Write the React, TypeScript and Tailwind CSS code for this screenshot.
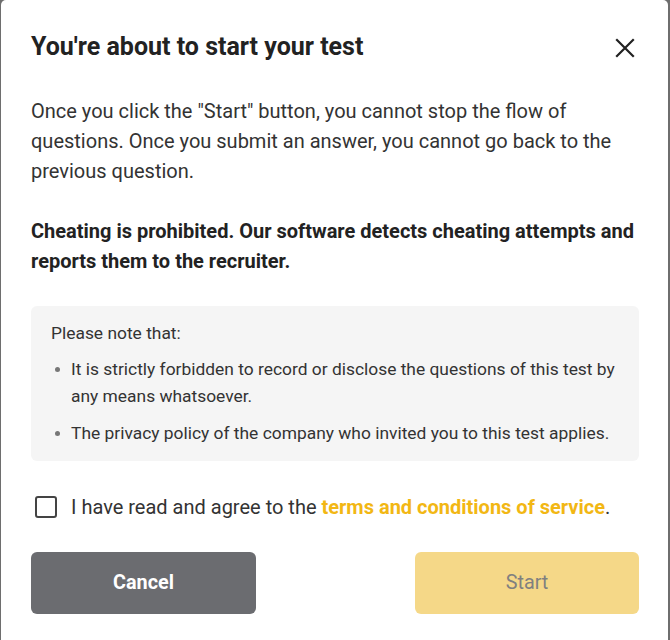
import React from "react";

export default function App() {
  return (
    <div className="w-[670px] h-[640px] bg-[#6e6e6e] overflow-hidden" style={{ fontFamily: "Roboto, 'Open Sans', sans-serif" }}>
      <div className="ml-[1px] w-[667px] h-[640px] bg-white rounded-t-[5px] px-[30px] pt-[31px]">
        <div className="flex items-center justify-between h-[32px]">
          <h1 className="text-[25px] leading-[32px] font-bold text-[#222]">You're about to start your test</h1>
          <svg width="20" height="20" viewBox="0 0 20 20" className="mr-[3px] mt-[1px]">
            <path d="M2 2 L18 18 M18 2 L2 18" stroke="#222" strokeWidth="2.2" strokeLinecap="square" />
          </svg>
        </div>
        <p className="mt-[33px] text-[20px] leading-[30px] text-[#333]">
          Once you click the "Start" button, you cannot stop the flow of questions. Once you submit an answer, you cannot go back to the previous question.
        </p>
        <p className="mt-[30px] text-[20px] leading-[30px] font-bold text-[#222]">
          Cheating is prohibited. Our software detects cheating attempts and reports them to the recruiter.
        </p>
        <div className="mt-[30px] w-[608px] bg-[#f5f5f5] rounded-[6px] pl-[20px] pr-[14px] py-[14px] text-[17.4px] leading-[27px] text-[#333]">
          <div>Please note that:</div>
          <div className="mt-[9px] flex">
            <span className="w-[20px] shrink-0 flex justify-start pl-[4px] pt-[11px]"><span className="w-[5px] h-[5px] rounded-full bg-[#777]" /></span>
            <span>It is strictly forbidden to record or disclose the questions of this test by any means whatsoever.</span>
          </div>
          <div className="mt-[10px] flex">
            <span className="w-[20px] shrink-0 flex justify-start pl-[4px] pt-[11px]"><span className="w-[5px] h-[5px] rounded-full bg-[#777]" /></span>
            <span>The privacy policy of the company who invited you to this test applies.</span>
          </div>
        </div>
        <div className="mt-[31px] flex items-center h-[30px]">
          <span className="ml-[4px] w-[22px] h-[22px] border-2 border-[#444] rounded-[3px] bg-white" />
          <span className="ml-[14px] text-[20px] leading-[30px] text-[#333]">
            I have read and agree to the <span className="font-bold text-[#f2b714]">terms and conditions of service</span>.
          </span>
        </div>
        <div className="mt-[30px] flex justify-between w-[608px]">
          <button className="w-[225px] h-[62px] rounded-[6px] bg-[#6b6c70] text-white text-[19.8px] font-bold">Cancel</button>
          <button className="w-[224px] h-[62px] rounded-[6px] bg-[#f5d888] text-[#808080] text-[19.8px] font-normal">Start</button>
        </div>
      </div>
    </div>
  );
}
